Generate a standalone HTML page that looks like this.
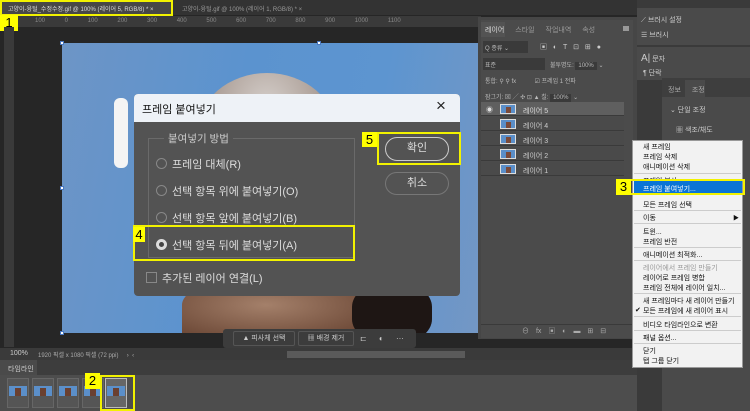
<!DOCTYPE html>
<html><head><meta charset="utf-8"><style>
*{margin:0;padding:0;box-sizing:border-box}
body{width:750px;height:411px;overflow:hidden;background:#262626;font-family:"Liberation Sans","Noto Sans CJK KR",sans-serif;position:relative;color:#ddd}
.a{position:absolute}
.t{font-size:7px;white-space:nowrap}
.yl{background:#ffff00;color:#000;font-size:13px;line-height:15px;text-align:center}
.yb{border:2px solid #f2f200}
.mi{position:absolute;left:10px;font-size:7px;color:#111;white-space:nowrap}
.sep{position:absolute;left:1px;right:1px;height:1px;background:#ccc}
.lrow{position:absolute;left:0;width:143px;height:14px;background:#4a4a4a;border-bottom:1px solid #3a3a3a}
.th{position:absolute;left:19px;top:2px;width:16px;height:10px;background:#5b8fc9;border:1px solid #ddd}
.th:after{content:"";position:absolute;left:5px;top:2px;width:5px;height:6px;background:#7a4a3a}
.fr{position:absolute;top:378px;width:22px;height:30px;background:#555;border:1px solid #666}
.fr i{position:absolute;left:1px;top:7px;width:18px;height:10px;background:#5b8fc9}
.fr i:after{content:"";position:absolute;left:6px;top:2px;width:6px;height:8px;background:#6a4030}
</style></head><body>
<!-- top tab bar -->
<div class="a" style="left:0;top:0;width:750px;height:15px;background:#333"></div>
<div class="a" style="left:0;top:0;width:172px;height:15px;background:#474747"></div>
<div class="a t" style="left:8px;top:4px;color:#ddd;font-size:6px">고양이-융털_수정수정.gif @ 100% (레이어 5, RGB/8) * ×</div>
<div class="a t" style="left:182px;top:4px;color:#999;font-size:6px">고양이-융털.gif @ 100% (레이어 1, RGB/8) * ×</div>
<div class="a yb" style="left:0;top:0;width:173px;height:16px"></div>
<div class="a yl" style="left:0;top:15px;width:18px;height:16px">1</div>
<!-- rulers -->
<div class="a" style="left:18px;top:16px;width:463px;height:11px;background:#3a3a3a"></div>
<div class="a t" style="left:35px;top:18px;color:#888;font-size:6px;word-spacing:18px">100 0 100 200 300 400 500 600 700 800 900 1000 1100</div>
<div class="a" style="left:4px;top:27px;width:10px;height:320px;background:#3a3a3a"></div>
<!-- image -->
<div class="a" style="left:62px;top:43px;width:420px;height:290px;background:linear-gradient(100deg,#6d95c6,#5b93cf 40%,#5d95d0 70%,#7497c4);overflow:hidden">
 <div class="a" style="left:135px;top:30px;width:140px;height:120px;border-radius:50% 50% 30% 30%;background:radial-gradient(ellipse at 50% 30%,#d6d0cc,#a89a92 60%,#8f7c72)"></div>
 <div class="a" style="left:120px;top:230px;width:240px;height:80px;border-radius:40% 40% 0 0;background:radial-gradient(ellipse at 35% 40%,#a4806a,#6e4a38 55%,#2a1c18 85%)"></div>
 <div class="a" style="left:290px;top:240px;width:80px;height:60px;border-radius:40%;background:#1e1614"></div>
 <div class="a" style="left:52px;top:55px;width:14px;height:70px;border-radius:6px;background:#f4f4f4"></div>
</div>
<div class="a" style="left:60px;top:41px;width:4px;height:4px;background:#fff;border:1px solid #4a78c0"></div>
<div class="a" style="left:317px;top:41px;width:4px;height:4px;background:#fff;border:1px solid #4a78c0"></div>
<div class="a" style="left:60px;top:186px;width:4px;height:4px;background:#fff;border:1px solid #4a78c0"></div>
<div class="a" style="left:60px;top:331px;width:4px;height:4px;background:#fff;border:1px solid #4a78c0"></div>
<!-- dialog -->
<div class="a" style="left:134px;top:94px;width:326px;height:202px;background:#535353;border-radius:4px;overflow:hidden">
 <div class="a" style="left:0;top:0;width:326px;height:28px;background:#eef2f7"></div>
 <div class="a" style="left:8px;top:7px;font-size:11px;color:#111">프레임 붙여넣기</div>
 <div class="a" style="left:302px;top:2px;font-size:17px;color:#222">×</div>
 <div class="a" style="left:14px;top:44px;width:207px;height:120px;border:1px solid #6a6a6a"></div>
 <div class="a" style="left:30px;top:37px;padding:0 4px;background:#535353;font-size:10.5px;color:#ccc">붙여넣기 방법</div>
 <div class="a" style="left:22px;top:58px;font-size:11px;color:#ddd;line-height:27px">
  <div><span style="display:inline-block;width:11px;height:11px;border:1px solid #888;border-radius:50%;vertical-align:-1px;margin-right:5px"></span>프레임 대체(R)</div>
  <div><span style="display:inline-block;width:11px;height:11px;border:1px solid #888;border-radius:50%;vertical-align:-1px;margin-right:5px"></span>선택 항목 위에 붙여넣기(O)</div>
  <div><span style="display:inline-block;width:11px;height:11px;border:1px solid #888;border-radius:50%;vertical-align:-1px;margin-right:5px"></span>선택 항목 앞에 붙여넣기(B)</div>
  <div><span style="display:inline-block;width:11px;height:11px;border:3px solid #ddd;background:#444;border-radius:50%;vertical-align:-1px;margin-right:5px"></span>선택 항목 뒤에 붙여넣기(A)</div>
 </div>
 <div class="a" style="left:12px;top:176px;font-size:11px;color:#ddd"><span style="display:inline-block;width:11px;height:11px;border:1px solid #888;vertical-align:-1px;margin-right:5px"></span>추가된 레이어 연결(L)</div>
 <div class="a" style="left:251px;top:43px;width:64px;height:24px;border:1.5px solid #ccc;border-radius:12px;font-size:11px;color:#ddd;text-align:center;line-height:21px">확인</div>
 <div class="a" style="left:251px;top:78px;width:64px;height:23px;border:1px solid #777;border-radius:12px;font-size:11px;color:#ddd;text-align:center;line-height:21px">취소</div>
</div>
<div class="a yb" style="left:133px;top:225px;width:222px;height:36px"></div>
<div class="a yl" style="left:133px;top:227px;width:12px;height:15px">4</div>
<div class="a yb" style="left:377px;top:132px;width:84px;height:33px"></div>
<div class="a yl" style="left:362px;top:132px;width:15px;height:15px">5</div>
<!-- context toolbar -->
<div class="a" style="left:223px;top:329px;width:193px;height:19px;background:#3c3c3c;border-radius:3px"></div>
<div class="a" style="left:233px;top:331px;width:62px;height:15px;border:1px solid #555;border-radius:2px;font-size:7px;color:#ccc;line-height:13px;text-align:center">▲ 피사체 선택</div>
<div class="a" style="left:298px;top:331px;width:56px;height:15px;border:1px solid #555;border-radius:2px;font-size:7px;color:#ccc;line-height:13px;text-align:center">▦ 배경 제거</div>
<div class="a t" style="left:360px;top:334px;color:#ccc;font-size:8px;word-spacing:10px">⊏ ◐ ···</div>
<!-- status bar -->
<div class="a" style="left:0;top:348px;width:750px;height:12px;background:#3a3a3a"></div>
<div class="a t" style="left:10px;top:350px;color:#ccc">100%</div>
<div class="a t" style="left:38px;top:350px;color:#aaa;font-size:6px">1920 픽셀 x 1080 픽셀 (72 ppi) &nbsp;&nbsp;&nbsp;&nbsp;›&nbsp; ‹</div>
<div class="a" style="left:287px;top:351px;width:178px;height:7px;background:#5a5a5a"></div>
<!-- timeline -->
<div class="a" style="left:0;top:360px;width:750px;height:51px;background:#3d3d3d"></div>
<div class="a" style="left:0;top:360px;width:37px;height:15px;background:#4a4a4a"></div>
<div class="a t" style="left:8px;top:364px;color:#ccc">타임라인</div>
<div class="a" style="left:0;top:375px;width:750px;height:36px;background:#4d4d4d"></div>
<div class="fr" style="left:7px"><i></i></div>
<div class="fr" style="left:32px"><i></i></div>
<div class="fr" style="left:57px"><i></i></div>
<div class="fr" style="left:82px"><i></i></div>
<div class="fr" style="left:105px;background:#666;border:1px solid #bbb"><i></i></div>
<div class="a yb" style="left:100px;top:375px;width:35px;height:36px"></div>
<div class="a yl" style="left:85px;top:373px;width:15px;height:16px">2</div>
<!-- layers panel -->
<div class="a" style="left:478px;top:17px;width:159px;height:322px;background:#464646"></div>
<div class="a" style="left:481px;top:20px;width:152px;height:318px;background:#4b4b4b"></div>
<div class="a" style="left:481px;top:22px;width:24px;height:15px;background:#535353"></div>
<div class="a t" style="left:485px;top:25px;color:#ddd;word-spacing:9px">레이어 <span style="color:#999">스타일 작업내역 속성</span></div>
<div class="a" style="left:623px;top:26px;width:6px;height:5px;background:#999"></div>
<div class="a" style="left:483px;top:41px;width:45px;height:12px;background:#3a3a3a;font-size:6px;color:#bbb;padding:2px">Q 종류 ⌄</div>
<div class="a t" style="left:540px;top:42px;color:#ccc;word-spacing:4px">▣ ◐ T ⊡ ⊞ ●</div>
<div class="a" style="left:483px;top:58px;width:62px;height:12px;background:#3a3a3a;font-size:6px;color:#bbb;padding:2px">표준</div>
<div class="a t" style="left:550px;top:60px;color:#bbb;font-size:6px">불투명도: <span style="background:#3a3a3a;padding:1px 3px">100%</span> ⌄</div>
<div class="a t" style="left:485px;top:76px;color:#bbb;font-size:6px">통합: ⚲ ⚲ fx &nbsp;&nbsp;&nbsp;&nbsp;&nbsp;&nbsp;&nbsp;&nbsp;&nbsp;&nbsp;☑ 프레임 1 전파</div>
<div class="a t" style="left:485px;top:92px;color:#bbb;font-size:6px">잠그기: ⊠ ╱ ✣ ⊡ ▲ 칠: <span style="background:#3a3a3a;padding:1px 3px">100%</span> ⌄</div>
<div class="a" style="left:481px;top:102px;width:152px;height:75px">
 <div class="lrow" style="top:0;background:#5f5f5f"><span class="a t" style="left:5px;top:3px">◉</span><div class="th"></div><span class="a t" style="left:42px;top:4px;color:#ddd">레이어 5</span></div>
 <div class="lrow" style="top:15px"><div class="th"></div><span class="a t" style="left:42px;top:4px;color:#ccc">레이어 4</span></div>
 <div class="lrow" style="top:30px"><div class="th"></div><span class="a t" style="left:42px;top:4px;color:#ccc">레이어 3</span></div>
 <div class="lrow" style="top:45px"><div class="th"></div><span class="a t" style="left:42px;top:4px;color:#ccc">레이어 2</span></div>
 <div class="lrow" style="top:60px"><div class="th"></div><span class="a t" style="left:42px;top:4px;color:#ccc">레이어 1</span></div>
</div>
<div class="a" style="left:481px;top:324px;width:152px;height:1px;background:#3a3a3a"></div>
<div class="a t" style="left:522px;top:326px;color:#aaa;word-spacing:5px">⊖ fx ▣ ◐ ▬ ⊞ ⊟</div>
<!-- right dock -->
<div class="a" style="left:637px;top:0;width:113px;height:411px;background:#3a3a3a"></div>
<div class="a" style="left:637px;top:8px;width:113px;height:37px;background:#4a4a4a"></div>
<div class="a" style="left:637px;top:47px;width:113px;height:33px;background:#4a4a4a"></div>
<div class="a t" style="left:641px;top:15px;color:#ccc">⟋ 브러시 설정</div>
<div class="a t" style="left:641px;top:30px;color:#ccc">☰ 브러시</div>
<div class="a t" style="left:641px;top:53px;color:#ccc"><span style="font-size:10px">A|</span> 문자</div>
<div class="a t" style="left:643px;top:68px;color:#ccc">¶ 단락</div>
<div class="a" style="left:662px;top:78px;width:88px;height:333px;background:#4a4a4a"></div>
<div class="a" style="left:662px;top:78px;width:88px;height:19px;background:#3e3e3e"></div>
<div class="a" style="left:685px;top:80px;width:20px;height:17px;background:#4a4a4a"></div>
<div class="a t" style="left:668px;top:85px;color:#aaa;word-spacing:9px">정보 조정</div>
<div class="a t" style="left:670px;top:105px;color:#ccc">⌄ 단일 조정</div>
<div class="a t" style="left:676px;top:125px;color:#ccc">▦ 색조/채도</div>
<!-- menu -->
<div class="a" style="left:632px;top:140px;width:111px;height:228px;background:#f2f2f2;border:1px solid #999">
 <div class="mi" style="top:1px">새 프레임</div>
 <div class="mi" style="top:11px">프레임 삭제</div>
 <div class="mi" style="top:21px">애니메이션 삭제</div>
 <div class="sep" style="top:32px"></div>
 <div class="mi" style="top:35px">프레임 복사</div>
 <div class="a" style="left:1px;top:40px;width:108px;height:13px;background:#0a74d6"></div>
 <div class="mi" style="top:43px;color:#fff">프레임 붙여넣기...</div>
 <div class="mi" style="top:59px">모든 프레임 선택</div>
 <div class="sep" style="top:69px"></div>
 <div class="mi" style="top:72px">이동</div><div class="a" style="right:3px;top:72px;font-size:6px;color:#111">▶</div>
 <div class="sep" style="top:82px"></div>
 <div class="mi" style="top:86px">트윈...</div>
 <div class="mi" style="top:96px">프레임 반전</div>
 <div class="sep" style="top:106px"></div>
 <div class="mi" style="top:109px">애니메이션 최적화...</div>
 <div class="sep" style="top:119px"></div>
 <div class="mi" style="top:122px;color:#999">레이어에서 프레임 만들기</div>
 <div class="mi" style="top:132px">레이어로 프레임 병합</div>
 <div class="mi" style="top:142px">프레임 전체에 레이어 일치...</div>
 <div class="sep" style="top:152px"></div>
 <div class="mi" style="top:155px">새 프레임마다 새 레이어 만들기</div>
 <div class="mi" style="top:165px"><span style="position:absolute;left:-8px">✔</span>모든 프레임에 새 레이어 표시</div>
 <div class="sep" style="top:175px"></div>
 <div class="mi" style="top:179px">비디오 타임라인으로 변환</div>
 <div class="sep" style="top:189px"></div>
 <div class="mi" style="top:192px">패널 옵션...</div>
 <div class="sep" style="top:202px"></div>
 <div class="mi" style="top:205px">닫기</div>
 <div class="mi" style="top:215px">탭 그룹 닫기</div>
</div>
<div class="a yb" style="left:616px;top:179px;width:129px;height:16px"></div>
<div class="a yl" style="left:616px;top:179px;width:15px;height:16px">3</div>
</body></html>
